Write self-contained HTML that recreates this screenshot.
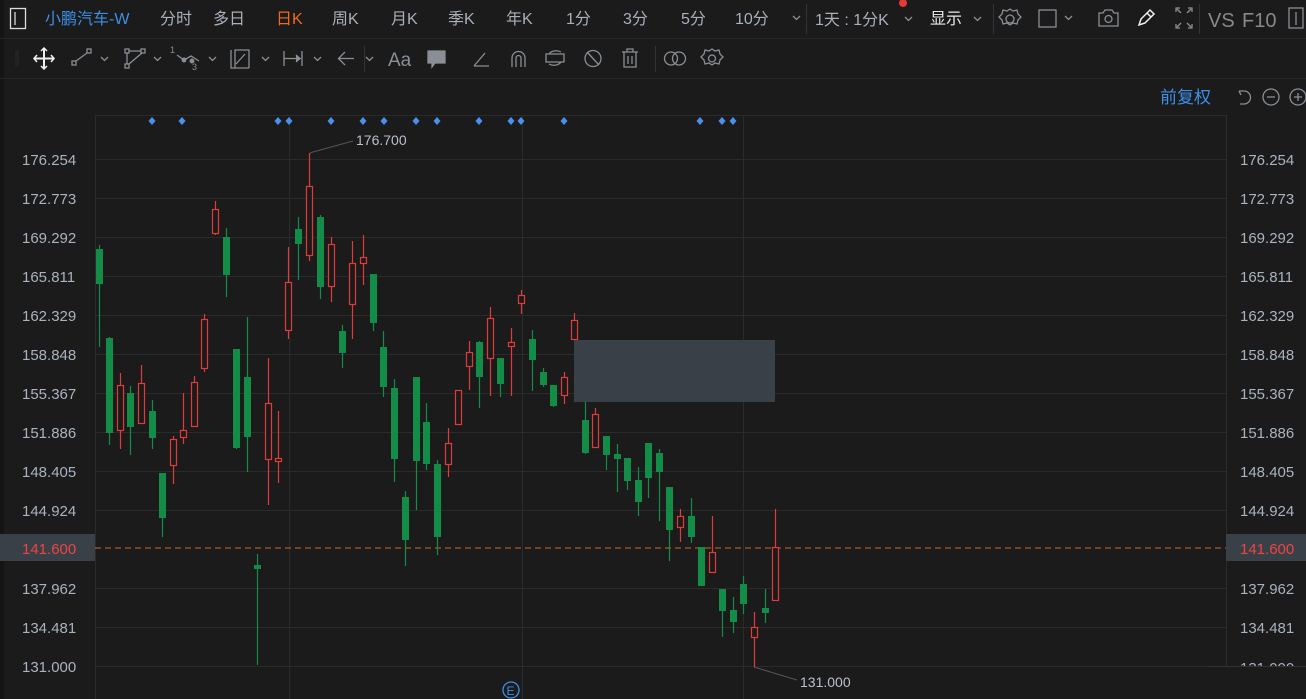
<!DOCTYPE html>
<html><head><meta charset="utf-8"><style>
body{margin:0;width:1306px;height:699px;background:#1b1b1b;overflow:hidden;font-family:"Liberation Sans","Noto Sans CJK SC",sans-serif;}
svg{position:absolute;left:0;top:0}
</style></head><body>
<svg width="1306" height="699" viewBox="0 0 1306 699" xmlns="http://www.w3.org/2000/svg" font-family="Liberation Sans, Noto Sans CJK SC, sans-serif">
<rect width="1306" height="699" fill="#1b1b1b"/>
<rect x="0" y="0" width="4" height="699" fill="#141414"/>
<!-- toolbar separators -->
<line x1="0" y1="38.5" x2="1306" y2="38.5" stroke="#262626"/>
<line x1="0" y1="78.5" x2="1306" y2="78.5" stroke="#262626"/>
<line x1="806.5" y1="4" x2="806.5" y2="34" stroke="#333"/>
<line x1="993.5" y1="4" x2="993.5" y2="34" stroke="#333"/>
<line x1="1199.5" y1="4" x2="1199.5" y2="34" stroke="#333"/>
<line x1="364.5" y1="46" x2="364.5" y2="72" stroke="#333"/>
<line x1="655.5" y1="46" x2="655.5" y2="72" stroke="#333"/>
<!-- top row -->
<rect x="10.5" y="8.5" width="15" height="20" fill="none" stroke="#ddd" stroke-width="1.3"/>
<line x1="15" y1="12" x2="15" y2="25" stroke="#ddd" stroke-width="1.3"/>
<g font-size="16" fill="#a9b0ba">
<text x="45" y="24" fill="#3d8fe8">小鹏汽车-W</text>
<text x="160" y="24">分时</text>
<text x="213" y="24">多日</text>
<text x="276" y="24" fill="#f2691c">日K</text>
<text x="332" y="24">周K</text>
<text x="391" y="24">月K</text>
<text x="448" y="24">季K</text>
<text x="506" y="24">年K</text>
<text x="566" y="24">1分</text>
<text x="623" y="24">3分</text>
<text x="681" y="24">5分</text>
<text x="735" y="24">10分</text>
<text x="815" y="25">1天 : 1分K</text>
<text x="930" y="24" fill="#e8e8e8">显示</text>
<text x="1208" y="27" font-size="20" fill="#888">VS</text>
<text x="1242" y="27" font-size="20" fill="#888">F10</text>
</g>
<g fill="none" stroke="#8a8f96" stroke-width="1.3">
<path d="M793 16 l3.5 3.5 l3.5 -3.5"/>
<path d="M905 17 l3.5 3.5 l3.5 -3.5"/>
<path d="M974 17 l3.5 3.5 l3.5 -3.5"/>
<path d="M1065 16 l3.5 3.5 l3.5 -3.5"/>
<circle cx="1010" cy="19" r="4"/>
<path d="M1010 9 l3 2 l4 -1 l1 4 l3 3 l-3 3 l-1 4 l-4 -1 l-3 2 l-3 -2 l-4 1 l-1 -4 l-3 -3 l3 -3 l1 -4 l4 1 z"/>
<rect x="1039" y="10" width="17" height="17"/>
<path d="M1099 13 h4 l2 -3 h7 l2 3 h4 v13 h-19 z"/><circle cx="1108.5" cy="19" r="3.5"/>
<path d="M1176 12 v-4 h4 M1192 12 v-4 h-4 M1176 24 v4 h4 M1192 24 v4 h-4 M1177 9 l4 4 M1191 9 l-4 4 M1177 27 l4 -4 M1191 27 l-4 -4"/>
<rect x="1289" y="8" width="14" height="20"/><line x1="1296" y1="12" x2="1296" y2="25"/>
</g>
<path d="M1139 25 l2 -6 l9 -9 l4 4 l-9 9 z M1147 13 l4 4" fill="none" stroke="#f0f0f0" stroke-width="1.5"/>
<circle cx="903" cy="3" r="4" fill="#e53935"/>
<!-- second row -->
<g fill="none" stroke="#8a8f96" stroke-width="1.3">
<path d="M16 50 v16 M18 50 v16" stroke="#2a2a2a" stroke-width="1"/>
<path d="M44 49 v19 M34.5 58.5 h19" stroke="#f0f0f0" stroke-width="2"/>
<path d="M41 51 l3 -3 l3 3 M41 66 l3 3 l3 -3 M37 55 l-3 3.5 l3 3.5 M51 55 l3 3.5 l-3 3.5" stroke="#f0f0f0" stroke-width="1.5"/>
<rect x="72" y="61" width="4" height="4"/><rect x="87" y="49" width="4" height="4"/><line x1="76" y1="61" x2="87" y2="53"/>
<path d="M101 57 l3.5 3.5 l3.5 -3.5"/>
<rect x="125" y="49" width="4" height="4"/><rect x="141" y="49" width="4" height="4"/><rect x="125" y="64" width="4" height="4"/>
<path d="M129 51 h12 M127 53 v11 M129 64 l13 -11"/>
<path d="M154 57 l3.5 3.5 l3.5 -3.5"/>
<path d="M177 55 l7 5 l7 -4 l8 5"/><circle cx="184" cy="60" r="1.8" fill="#8a8f96"/><circle cx="192" cy="61" r="1.8" fill="#8a8f96"/>
<path d="M209 57 l3.5 3.5 l3.5 -3.5"/>
<path d="M231 50 v18 h18 M235 68 v-18 h14 v18 M236 64 l9 -10"/>
<path d="M262 57 l3.5 3.5 l3.5 -3.5"/>
<path d="M284 51 v15 M284 58.5 h17 M302 51 v15"/><path d="M296 55 l4 3.5 l-4 3.5" fill="#8a8f96"/>
<path d="M314 57 l3.5 3.5 l3.5 -3.5"/>
<path d="M339 58.5 h15 M345 52 l-6.5 6.5 l6.5 6.5"/>
<path d="M366 57 l3.5 3.5 l3.5 -3.5"/>
<path d="M428 51 h17 v12 h-10 l-3 4 v-4 h-4 z" fill="#8a8f96"/>
<path d="M474 66 h15 M474 66 l11 -13"/>
<path d="M512 67 v-9 a6.5 6.5 0 0 1 13 0 v9 M516 67 v-9 a2.5 2.5 0 0 1 5 0 v9"/>
<path d="M546 54 h18 v8 h-18 z M549 54 a8 6 0 0 1 12 -2 M561 62 a8 6 0 0 1 -12 2"/>
<circle cx="593" cy="58.5" r="8"/><path d="M587 52 l12 13"/>
<path d="M622 52 h16 M627 52 v-3 h6 v3 M624 52 v15 h12 v-15 M628 56 v8 M632 56 v8"/>
<circle cx="671" cy="58.5" r="6.5"/><circle cx="679" cy="58.5" r="6.5"/>
<circle cx="712" cy="58.5" r="3.5"/>
<path d="M712 49 l3 2 l4 -1 l1 4 l3 3 l-3 3 l-1 4 l-4 -1 l-3 2 l-3 -2 l-4 1 l-1 -4 l-3 -3 l3 -3 l1 -4 l4 1 z"/>
</g>
<text x="388" y="66" font-size="19" fill="#8a8f96">Aa</text>
<text x="170" y="53" font-size="9" fill="#8a8f96">1</text>
<text x="192" y="70" font-size="9" fill="#8a8f96">3</text>
<!-- adj row -->
<text x="1160" y="103" font-size="17" fill="#3d8fe8">前复权</text>
<g fill="none" stroke="#8a8f96" stroke-width="1.3">
<path d="M1239 91 h5 a6.5 6.5 0 1 1 0 13 h-4 M1239 91 l2 4"/>
<circle cx="1271" cy="97" r="8"/><path d="M1267 97 h8"/>
<circle cx="1298" cy="97" r="8"/><path d="M1294 97 h8 M1298 93 v8"/>
</g>
<!-- plot grid -->
<g stroke="#2b2b2b" stroke-width="1">
<line x1="95" y1="115.5" x2="1226" y2="115.5"/>
<line x1="95.5" y1="115" x2="95.5" y2="699"/>
<line x1="1226.5" y1="115" x2="1226.5" y2="666"/>
<line x1="289.5" y1="115" x2="289.5" y2="699"/>
<line x1="522.5" y1="115" x2="522.5" y2="699"/>
<line x1="743.5" y1="115" x2="743.5" y2="699"/>
<line x1="95" y1="159.5" x2="1226" y2="159.5"/>
<line x1="95" y1="198.5" x2="1226" y2="198.5"/>
<line x1="95" y1="237.5" x2="1226" y2="237.5"/>
<line x1="95" y1="276.5" x2="1226" y2="276.5"/>
<line x1="95" y1="315.5" x2="1226" y2="315.5"/>
<line x1="95" y1="354.5" x2="1226" y2="354.5"/>
<line x1="95" y1="393.5" x2="1226" y2="393.5"/>
<line x1="95" y1="432.5" x2="1226" y2="432.5"/>
<line x1="95" y1="471.5" x2="1226" y2="471.5"/>
<line x1="95" y1="510.5" x2="1226" y2="510.5"/>
<line x1="95" y1="588.5" x2="1226" y2="588.5"/>
<line x1="95" y1="627.5" x2="1226" y2="627.5"/>
<line x1="95" y1="666.5" x2="1208" y2="666.5"/>
<line x1="1208" y1="666.5" x2="1306" y2="666.5" stroke="#333"/>
</g>
<!-- axis labels -->
<g font-size="15" fill="#a9b3c0">
<text x="22" y="165">176.254</text><text x="22" y="204">172.773</text><text x="22" y="243">169.292</text>
<text x="22" y="282">165.811</text><text x="22" y="321">162.329</text><text x="22" y="360">158.848</text>
<text x="22" y="399">155.367</text><text x="22" y="438">151.886</text><text x="22" y="477">148.405</text>
<text x="22" y="516">144.924</text><text x="22" y="594">137.962</text><text x="22" y="633">134.481</text>
<text x="22" y="672">131.000</text>
<text x="1240" y="165">176.254</text><text x="1240" y="204">172.773</text><text x="1240" y="243">169.292</text>
<text x="1240" y="282">165.811</text><text x="1240" y="321">162.329</text><text x="1240" y="360">158.848</text>
<text x="1240" y="399">155.367</text><text x="1240" y="438">151.886</text><text x="1240" y="477">148.405</text>
<text x="1240" y="516">144.924</text><text x="1240" y="594">137.962</text><text x="1240" y="633">134.481</text>
</g>
<rect x="1226" y="666" width="80" height="33" fill="#1b1b1b"/>
<text x="1240" y="673" font-size="15" fill="#a9b3c0">131.000</text>
<rect x="1227" y="667" width="79" height="32" fill="#1b1b1b"/>
<line x1="1208" y1="666.5" x2="1306" y2="666.5" stroke="#333"/>
<!-- price line -->
<line x1="95" y1="548" x2="1226" y2="548" stroke="#d2691e" stroke-dasharray="6,4" stroke-width="1"/>
<rect x="0" y="534" width="95" height="27" fill="#3a4048"/>
<text x="22" y="554" font-size="15" fill="#ef4444">141.600</text>
<rect x="1226" y="534" width="80" height="27" fill="#3a4048"/>
<text x="1240" y="554" font-size="15" fill="#ef4444">141.600</text>
<!-- diamonds -->
<g fill="#4a90f0">
<path d="M152 117 l3.5 4 l-3.5 4 l-3.5 -4z"/><path d="M182 117 l3.5 4 l-3.5 4 l-3.5 -4z"/>
<path d="M278 117 l3.5 4 l-3.5 4 l-3.5 -4z"/><path d="M289 117 l3.5 4 l-3.5 4 l-3.5 -4z"/>
<path d="M331 117 l3.5 4 l-3.5 4 l-3.5 -4z"/><path d="M363 117 l3.5 4 l-3.5 4 l-3.5 -4z"/>
<path d="M384 117 l3.5 4 l-3.5 4 l-3.5 -4z"/><path d="M416 117 l3.5 4 l-3.5 4 l-3.5 -4z"/>
<path d="M437 117 l3.5 4 l-3.5 4 l-3.5 -4z"/><path d="M479 117 l3.5 4 l-3.5 4 l-3.5 -4z"/>
<path d="M511 117 l3.5 4 l-3.5 4 l-3.5 -4z"/><path d="M521 117 l3.5 4 l-3.5 4 l-3.5 -4z"/>
<path d="M564 117 l3.5 4 l-3.5 4 l-3.5 -4z"/><path d="M700 117 l3.5 4 l-3.5 4 l-3.5 -4z"/>
<path d="M722 117 l3.5 4 l-3.5 4 l-3.5 -4z"/><path d="M733 117 l3.5 4 l-3.5 4 l-3.5 -4z"/>
</g>
<!-- grey box -->
<rect x="574" y="340" width="201" height="62" fill="#3a4048"/>
<!-- annotations -->
<path d="M310 153 L313 152 L353 141" stroke="#555" fill="none"/>
<text x="356" y="145" font-size="14" fill="#b8c0ca">176.700</text>
<path d="M754 667 L797 680" stroke="#555" fill="none"/>
<text x="800" y="687" font-size="14" fill="#b8c0ca">131.000</text>
<circle cx="511" cy="690" r="8" fill="none" stroke="#3d8fe8" stroke-width="1.3"/>
<text x="506.5" y="695" font-size="12" fill="#3d8fe8">E</text>
<!-- green candles -->
<g stroke="#128c46" stroke-width="1.2" fill="#128c46">
<line x1="99.5" y1="245" x2="99.5" y2="347"/><rect x="96" y="249" width="7" height="35" stroke="none"/>
<line x1="109.5" y1="337" x2="109.5" y2="445"/><rect x="106" y="338" width="7" height="95" stroke="none"/>
<line x1="130.5" y1="386" x2="130.5" y2="455"/><rect x="127" y="393" width="7" height="34" stroke="none"/>
<line x1="152.5" y1="400" x2="152.5" y2="449"/><rect x="149" y="411" width="7" height="27" stroke="none"/>
<line x1="162.5" y1="473" x2="162.5" y2="537"/><rect x="159" y="473" width="7" height="45" stroke="none"/>
<line x1="226.5" y1="228" x2="226.5" y2="297"/><rect x="223" y="237" width="7" height="38" stroke="none"/>
<line x1="236.5" y1="349" x2="236.5" y2="449"/><rect x="233" y="349" width="7" height="99" stroke="none"/>
<line x1="247.5" y1="317" x2="247.5" y2="472"/><rect x="244" y="377" width="7" height="60" stroke="none"/>
<line x1="257.5" y1="554" x2="257.5" y2="665"/><rect x="254" y="565" width="7" height="4" stroke="none"/>
<line x1="298.5" y1="217" x2="298.5" y2="280"/><rect x="295" y="229" width="7" height="15" stroke="none"/>
<line x1="320.5" y1="215" x2="320.5" y2="299"/><rect x="317" y="217" width="7" height="70" stroke="none"/>
<line x1="342.5" y1="325" x2="342.5" y2="368"/><rect x="339" y="331" width="7" height="22" stroke="none"/>
<line x1="373.5" y1="274" x2="373.5" y2="331"/><rect x="370" y="274" width="7" height="49" stroke="none"/>
<line x1="383.5" y1="331" x2="383.5" y2="397"/><rect x="380" y="347" width="7" height="40" stroke="none"/>
<line x1="394.5" y1="379" x2="394.5" y2="482"/><rect x="391" y="388" width="7" height="71" stroke="none"/>
<line x1="405.5" y1="491" x2="405.5" y2="566"/><rect x="402" y="497" width="7" height="43" stroke="none"/>
<line x1="416.5" y1="377" x2="416.5" y2="510"/><rect x="413" y="377" width="7" height="84" stroke="none"/>
<line x1="426.5" y1="403" x2="426.5" y2="470"/><rect x="423" y="422" width="7" height="42" stroke="none"/>
<line x1="437.5" y1="460" x2="437.5" y2="555"/><rect x="434" y="464" width="7" height="73" stroke="none"/>
<line x1="479.5" y1="341" x2="479.5" y2="408"/><rect x="476" y="342" width="7" height="35" stroke="none"/>
<line x1="500.5" y1="358" x2="500.5" y2="397"/><rect x="497" y="358" width="7" height="26" stroke="none"/>
<line x1="532.5" y1="330" x2="532.5" y2="391"/><rect x="529" y="339" width="7" height="21" stroke="none"/>
<line x1="543.5" y1="368" x2="543.5" y2="387"/><rect x="540" y="372" width="7" height="13" stroke="none"/>
<line x1="553.5" y1="385" x2="553.5" y2="407"/><rect x="550" y="385" width="7" height="21" stroke="none"/>
<line x1="585.5" y1="402" x2="585.5" y2="454"/><rect x="582" y="420" width="7" height="33" stroke="none"/>
<line x1="606.5" y1="436" x2="606.5" y2="470"/><rect x="603" y="436" width="7" height="19" stroke="none"/>
<line x1="617.5" y1="444" x2="617.5" y2="492"/><rect x="614" y="454" width="7" height="5" stroke="none"/>
<line x1="627.5" y1="458" x2="627.5" y2="490"/><rect x="624" y="458" width="7" height="23" stroke="none"/>
<line x1="638.5" y1="467" x2="638.5" y2="516"/><rect x="635" y="480" width="7" height="22" stroke="none"/>
<line x1="648.5" y1="443" x2="648.5" y2="498"/><rect x="645" y="443" width="7" height="35" stroke="none"/>
<line x1="659.5" y1="449" x2="659.5" y2="521"/><rect x="656" y="453" width="7" height="19" stroke="none"/>
<line x1="669.5" y1="487" x2="669.5" y2="561"/><rect x="666" y="487" width="7" height="43" stroke="none"/>
<line x1="691.5" y1="498" x2="691.5" y2="543"/><rect x="688" y="516" width="7" height="21" stroke="none"/>
<line x1="701.5" y1="547" x2="701.5" y2="586"/><rect x="698" y="547" width="7" height="39" stroke="none"/>
<line x1="722.5" y1="589" x2="722.5" y2="637"/><rect x="719" y="589" width="7" height="22" stroke="none"/>
<line x1="733.5" y1="597" x2="733.5" y2="633"/><rect x="730" y="610" width="7" height="12" stroke="none"/>
<line x1="743.5" y1="576" x2="743.5" y2="614"/><rect x="740" y="584" width="7" height="20" stroke="none"/>
<line x1="765.5" y1="589" x2="765.5" y2="623"/><rect x="762" y="608" width="7" height="5" stroke="none"/>
</g>
<!-- red candles -->
<g stroke="#e03a3a" stroke-width="1.2" fill="#1b1b1b">
<line x1="120.5" y1="373" x2="120.5" y2="449"/><rect x="117.5" y="385.5" width="6" height="45"/>
<line x1="141.5" y1="365" x2="141.5" y2="424"/><rect x="138.5" y="383.5" width="6" height="40"/>
<line x1="173.5" y1="436" x2="173.5" y2="484"/><rect x="170.5" y="439.5" width="6" height="26"/>
<line x1="183.5" y1="393" x2="183.5" y2="444"/><rect x="180.5" y="430.5" width="6" height="7"/>
<line x1="194.5" y1="376" x2="194.5" y2="427"/><rect x="191.5" y="382.5" width="6" height="44"/>
<line x1="204.5" y1="314" x2="204.5" y2="372"/><rect x="201.5" y="319.5" width="6" height="49"/>
<line x1="215.5" y1="201" x2="215.5" y2="235"/><rect x="212.5" y="209.5" width="6" height="24"/>
<line x1="268.5" y1="358" x2="268.5" y2="505"/><rect x="265.5" y="403.5" width="6" height="56"/>
<line x1="278.5" y1="411" x2="278.5" y2="483"/><rect x="275.5" y="458.5" width="6" height="3"/>
<line x1="288.5" y1="247" x2="288.5" y2="339"/><rect x="285.5" y="282.5" width="6" height="48"/>
<line x1="309.5" y1="153" x2="309.5" y2="261"/><rect x="306.5" y="186.5" width="6" height="69"/>
<line x1="331.5" y1="237" x2="331.5" y2="302"/><rect x="328.5" y="244.5" width="6" height="42"/>
<line x1="352.5" y1="241" x2="352.5" y2="339"/><rect x="349.5" y="263.5" width="6" height="41"/>
<line x1="363.5" y1="235" x2="363.5" y2="285"/><rect x="360.5" y="257.5" width="6" height="6"/>
<line x1="448.5" y1="428" x2="448.5" y2="477"/><rect x="445.5" y="443.5" width="6" height="21"/>
<line x1="458.5" y1="390" x2="458.5" y2="425"/><rect x="455.5" y="390.5" width="6" height="34"/>
<line x1="469.5" y1="341" x2="469.5" y2="390"/><rect x="466.5" y="352.5" width="6" height="14"/>
<line x1="490.5" y1="307" x2="490.5" y2="396"/><rect x="487.5" y="318.5" width="6" height="40"/>
<line x1="511.5" y1="328" x2="511.5" y2="396"/><rect x="508.5" y="342.5" width="6" height="4"/>
<line x1="521.5" y1="290" x2="521.5" y2="314"/><rect x="518.5" y="295.5" width="6" height="8"/>
<line x1="564.5" y1="372" x2="564.5" y2="404"/><rect x="561.5" y="377.5" width="6" height="18"/>
<line x1="574.5" y1="313" x2="574.5" y2="340"/><rect x="571.5" y="320.5" width="6" height="19"/>
<line x1="595.5" y1="408" x2="595.5" y2="448"/><rect x="592.5" y="414.5" width="6" height="33"/>
<line x1="680.5" y1="509" x2="680.5" y2="542"/><rect x="677.5" y="516.5" width="6" height="11"/>
<line x1="712.5" y1="516" x2="712.5" y2="573"/><rect x="709.5" y="552.5" width="6" height="20"/>
<line x1="754.5" y1="612" x2="754.5" y2="667"/><rect x="751.5" y="627.5" width="6" height="10"/>
<line x1="775.5" y1="509" x2="775.5" y2="601"/><rect x="772.5" y="547.5" width="6" height="53"/>
</g>
</svg>
</body></html>
